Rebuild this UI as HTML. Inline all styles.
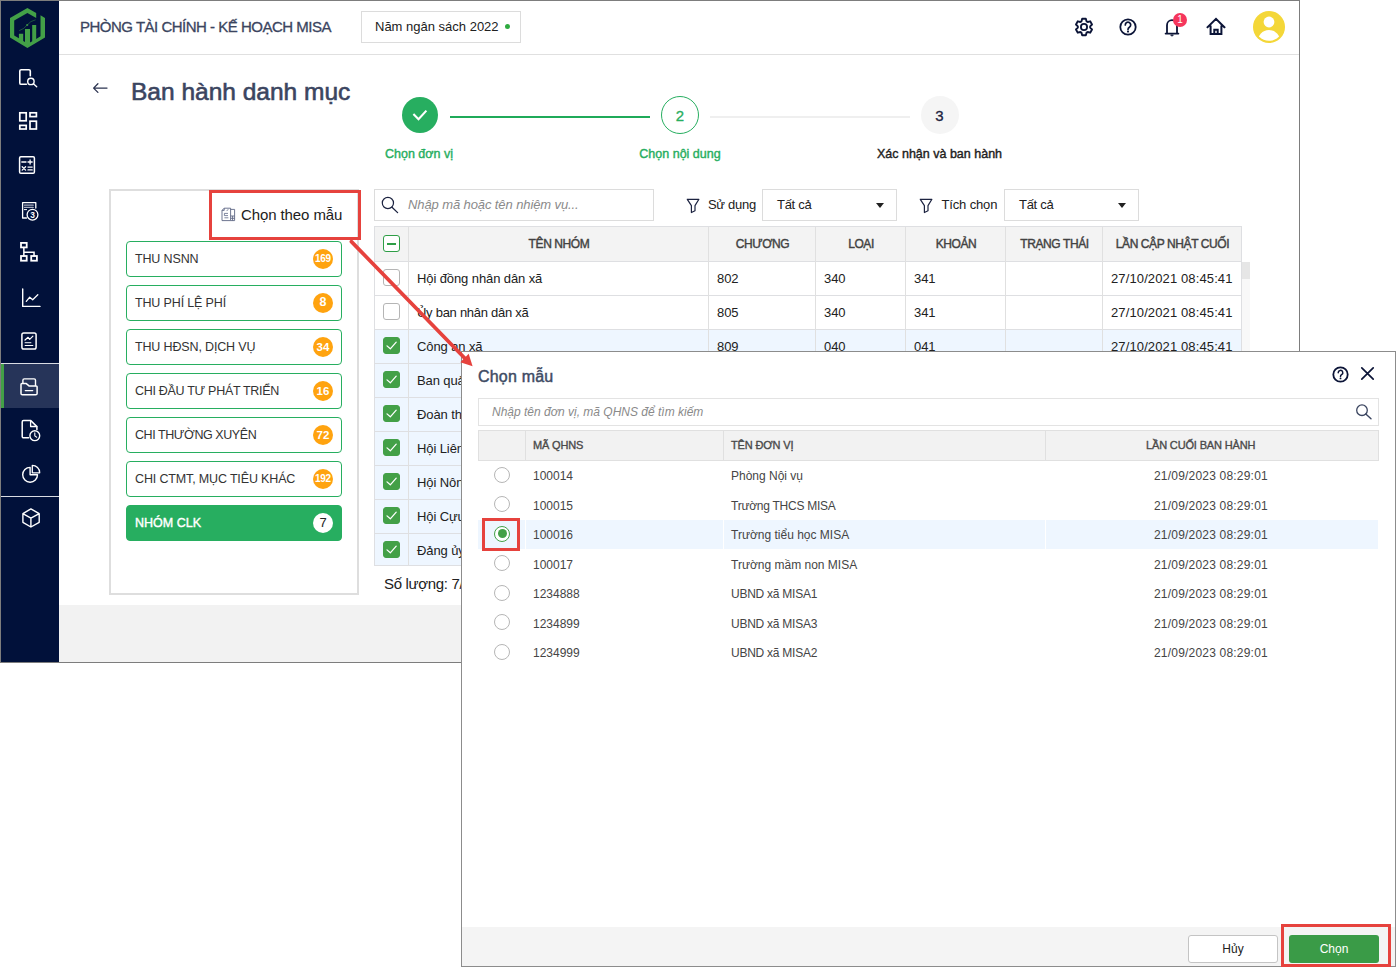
<!DOCTYPE html>
<html lang="vi">
<head>
<meta charset="utf-8">
<title>Ban hành danh mục</title>
<style>
*{box-sizing:border-box;margin:0;padding:0}
html,body{width:1398px;height:970px;overflow:hidden;background:#fff}
body{font-family:"Liberation Sans",sans-serif;font-size:13px;color:#212121;position:relative}
.a{position:absolute}
.t{position:absolute;white-space:nowrap;line-height:1}
#win{position:absolute;left:0;top:0;width:1300px;height:663px;border:1px solid #7d7d7d;background:#fff}
#side{position:absolute;left:1px;top:1px;width:58px;height:661px;background:#01113a}
#hdr{position:absolute;left:59px;top:1px;width:1240px;height:54px;background:#fff;border-bottom:1px solid #e0e0e0}
#foot{position:absolute;left:59px;top:605px;width:1240px;height:57px;background:#f2f2f2}
svg{position:absolute;overflow:visible}
.sico{fill:none;stroke:#fff;stroke-width:1.6;stroke-linecap:round;stroke-linejoin:round}
.hico{fill:none;stroke:#0b1437;stroke-width:1.8;stroke-linecap:round;stroke-linejoin:round}
/* left panel */
#lp{position:absolute;left:109px;top:189px;width:250px;height:406px;border:2px solid #dedede;background:#fff}
.cat{position:absolute;left:126px;width:216px;height:36px;border:1px solid #27ae60;border-radius:4px;background:#fff}
.cat span{position:absolute;left:8px;top:11px;font-size:12.5px;letter-spacing:-0.15px;line-height:1;color:#333;white-space:nowrap}
.cat b{position:absolute;right:8px;top:7px;width:20px;height:20px;border-radius:50%;background:#ffa30f;color:#fff;font-size:11.5px;line-height:20px;text-align:center;font-weight:bold}
.cat.on{background:#27ae60}
.cat.on span{color:#fff;-webkit-text-stroke:0.4px #fff;letter-spacing:0}
.cat.on b{background:#fff;color:#212121;font-weight:normal;font-size:13px}
.redbox{position:absolute;border:3px solid #e6423d}
/* inputs */
.inp{position:absolute;height:32px;border:1px solid #dcdcdc;background:#fff}
.ph{position:absolute;white-space:nowrap;line-height:1;font-style:italic;color:#8a8a8a}
.caret{position:absolute;width:0;height:0;border-left:4.5px solid transparent;border-right:4.5px solid transparent;border-top:5px solid #212121}
/* table */
#tb{position:absolute;left:374px;top:226px;width:868px;height:340px;border:1px solid #dedfe2;background:#fff;overflow:hidden}
#tb .hd{position:absolute;left:0;top:0;width:868px;height:35px;background:#f3f3f3;border-bottom:1px solid #dedfe2}
#tb .row{position:absolute;left:0;width:868px;height:34px;border-bottom:1px solid #dedfe2}
#tb .row.sel{background:#eef6ff}
#tb .vl{position:absolute;top:0;width:1px;height:342px;background:#e0e0e0}
#tb .th{position:absolute;top:11px;font-size:12px;letter-spacing:-0.4px;-webkit-text-stroke:0.4px #424242;color:#424242;line-height:1;white-space:nowrap;text-align:center}
#tb .td{position:absolute;top:10px;font-size:13px;letter-spacing:-0.1px;line-height:1;white-space:nowrap;color:#212121}
.cb{position:absolute;width:17px;height:17px;border:1px solid #b5b5b5;border-radius:3px;background:#fff}
.cb.ck{background:#43a047;border-color:#43a047}
.cb.ind{border-color:#2e9e46}
/* modal */
#md{position:absolute;left:461px;top:351px;width:935px;height:616px;border:1px solid #8c8c8c;background:#fff}
#mdf{position:absolute;left:462px;top:927px;width:933px;height:39px;background:#f4f4f4}
.mrow{position:absolute;left:478px;width:900px;height:29px}
.mrow.sel{background:#eef6ff}
.mtd{position:absolute;font-size:12px;line-height:1;white-space:nowrap;color:#454545}
.rd{position:absolute;width:16px;height:16px;border:1px solid #b6b6b6;border-radius:50%;background:#fff}
.mth{font-size:11px;-webkit-text-stroke:0.35px #4a4a4a;color:#4a4a4a;letter-spacing:-0.15px}
</style>
</head>
<body>
<div id="win"></div>
<div id="side"></div>
<div id="hdr"></div>
<div id="foot"></div>
<!-- sidebar -->
<svg style="left:0;top:0" width="60" height="662" viewBox="0 0 60 662">
 <!-- logo -->
 <g fill="#43a047">
  <path d="M36.2 12.9L27.4 7.9L10 17.9V37.4L27.4 48.1L45 37.4V17.9L40.5 15.3V36.3L36.2 38.9V25H32.2V41.2L30 42.4V29H25V42.1L23.2 41V33.7H18.9V38.3L14.2 35.4V20.4L27.4 13L36.2 18z"/>
  <circle cx="27.2" cy="25" r="1.1" opacity="0.85"/>
 </g>
 <path d="M19.2 30.6Q24 29.2 27.2 25T35.6 19.8" fill="none" stroke="#43a047" stroke-width="0.65" opacity="0.7"/>
 <!-- active item -->
 <rect x="1" y="363" width="58" height="1" fill="#d9dce3"/>
 <rect x="1" y="364" width="58" height="44" fill="#263459"/>
 <rect x="1" y="364" width="3" height="44" fill="#43a047"/>
 <rect x="1" y="496" width="58" height="1" fill="#d9dce3"/>
 <g class="sico">
  <!-- 1 doc search -->
  <path d="M30.3 75.8V71.1a1.4 1.4 0 0 0-1.4-1.4H21.2a1.4 1.4 0 0 0-1.4 1.4V82.9a1.4 1.4 0 0 0 1.4 1.4H26.4"/>
  <circle cx="30.9" cy="81.4" r="3.2" stroke-width="1.4"/><path d="M33.4 83.7L36.7 86.7" stroke-width="1.4"/>
  <!-- 2 grid -->
  <g stroke-width="1.7" stroke-linejoin="miter"><rect x="19.8" y="112.8" width="6.4" height="8"/><rect x="30" y="112.8" width="6.4" height="3.8"/><rect x="19.8" y="125.4" width="6.4" height="3.6"/><rect x="30" y="121.2" width="6.4" height="7.8"/></g>
  <!-- 3 calculator -->
  <rect x="19.6" y="156.7" width="14.8" height="16.6" rx="1.3" stroke-width="1.5"/>
  <g stroke-width="1.3"><path d="M21.8 162H26M28 162H32.2M30.1 159.9V164.1M22.2 166.7L25.6 170.1M25.6 166.7L22.2 170.1M28 167.1H32.2M28 169.9H32.2"/></g>
  <!-- 4 doc clock -->
  <path d="M35.8 208V202.6H22.6V218H26.5" stroke-width="1.3"/>
  <path d="M24.5 205.2H33.2M24.5 207.4H33.2" stroke="#a9afc0" stroke-width="1.3"/>
  <path d="M24.3 209.6H26.6" stroke-width="1"/>
  <circle cx="32.5" cy="214.7" r="5.4" stroke-width="1.3" fill="#01113a"/>
  <text x="32.6" y="217.6" text-anchor="middle" font-family="Liberation Sans, sans-serif" font-size="8.4" font-weight="bold" fill="#fff" stroke="none">3</text>
  <!-- 5 org chart -->
  <g stroke-width="1.8" stroke-linejoin="miter"><rect x="21" y="242.9" width="5.7" height="4.5"/><rect x="21" y="256" width="5.7" height="4.7"/><rect x="31.2" y="256" width="5.7" height="4.7"/><path d="M23.85 247.4V256M23.85 252.2H34.05V256" stroke-width="1.5"/></g>
  <!-- 6 line chart -->
  <path d="M22.7 289V306.4H40" stroke-width="1.4"/><path d="M26.3 301.3L29.7 297.2L32.7 299.7L37.8 294.8" stroke-width="1.3"/>
  <!-- 7 report -->
  <rect x="21.9" y="332.9" width="14.2" height="16.2" rx="1.8" stroke-width="1.5"/>
  <path d="M25 340L28.1 337.3L29.7 339.3L32.9 336.1" stroke-width="1.2"/><path d="M25.2 342.7H30.8" stroke="#c3c8d4" stroke-width="1.3"/><path d="M25.2 345.5H32.8" stroke-width="1.2"/>
  <!-- 8 folder -->
  <path d="M22.9 383V380.3a1.4 1.4 0 0 1 1.4-1.4H34.1a1.4 1.4 0 0 1 1.4 1.4V385.5" stroke-width="1.4"/>
  <path d="M21 384.5a0.9 0.9 0 0 1 .9-.9H26.3L29.3 386.1H36.2a0.9 0.9 0 0 1 .9.9V393.4a1.4 1.4 0 0 1-1.4 1.4H22.4a1.4 1.4 0 0 1-1.4-1.4z" stroke-width="1.5"/>
  <path d="M25.3 390.6H32.7" stroke-width="1.3"/>
  <!-- 9 doc with clock -->
  <path d="M28.6 437.8H23.6a1.4 1.4 0 0 1-1.4-1.4V422a1.4 1.4 0 0 1 1.4-1.4H30.8L36.9 426.6V429.5" stroke-width="1.5"/>
  <path d="M30.6 420.8V426.5H36.8" stroke-width="1.3"/>
  <circle cx="34.8" cy="435.7" r="4.9" stroke-width="1.4" fill="#01113a"/><path d="M34.8 432.9V435.9L36.7 437.2" stroke-width="1.1"/>
  <!-- 10 pie -->
  <path d="M30.1 467.4A7.4 7.4 0 1 0 37.5 474.8H30.1z" stroke-width="1.4"/>
  <path d="M32.3 465.4A7.4 7.4 0 0 1 39.7 472.8H32.3z" stroke-width="1.3"/>
  <!-- 11 cube -->
  <path d="M30.9 508.9L39.2 513.7V522.3L30.9 527L22.9 522.3V513.7zM22.9 513.7L30.9 518.2L39.2 513.7M30.9 518.2V527" stroke-width="1.4"/>
 </g>
</svg>
<!-- header -->
<div class="t" id="org" style="left:80px;top:19px;font-size:15px;letter-spacing:-0.5px;color:#3b4560;-webkit-text-stroke:0.3px #3b4560">PHÒNG TÀI CHÍNH - KẾ HOẠCH MISA</div>
<div class="a" style="left:361px;top:11px;width:160px;height:32px;border:1px solid #dcdcdc;background:#fff"></div>
<div class="t" id="nam" style="left:375px;top:20px;font-size:13px;color:#212121">Năm ngân sách 2022</div>
<div class="a" style="left:505px;top:24px;width:5px;height:5px;border-radius:50%;background:#2eaa3f"></div>
<svg style="left:1060px;top:5px" width="240" height="46" viewBox="1060 5 240 46">
 <g class="hico">
  <!-- gear -->
  <path d="M1081.47 21.34L1082.17 18.80L1085.83 18.80L1086.53 21.34L1087.64 21.98L1090.18 21.31L1092.02 24.49L1090.17 26.36L1090.17 27.64L1092.02 29.51L1090.18 32.69L1087.64 32.02L1086.53 32.66L1085.83 35.20L1082.17 35.20L1081.47 32.66L1080.36 32.02L1077.82 32.69L1075.98 29.51L1077.83 27.64L1077.83 26.36L1075.98 24.49L1077.82 21.31L1080.36 21.98z" stroke-width="1.9" stroke-linejoin="round"/>
  <circle cx="1084" cy="27" r="3.1" stroke-width="1.8"/>
  <!-- help -->
  <circle cx="1128" cy="27" r="7.7" stroke-width="1.8"/>
  <path d="M1125.3 24.9a2.7 2.7 0 1 1 4.1 2.3c-.9.6-1.4 1.1-1.4 2.2" stroke-width="1.7"/>
  <!-- bell -->
  <path d="M1165.6 33.6H1178.4M1167 33.6V25.2a5 5 0 0 1 10 0V33.6" stroke-width="1.8"/>
  <path d="M1170.8 35.3a1.3 1.3 0 0 0 2.4 0z" fill="#0b1437" stroke-width="0.8"/>
  <!-- home -->
  <path d="M1207.6 27.2L1216 18.9L1224.4 27.2M1210.6 26.5V34.1H1221.4V26.5M1214.3 34V29.8H1217.7V34" stroke-width="2" stroke-linecap="square" stroke-linejoin="miter"/>
 </g>
 <circle cx="1128" cy="31.6" r="1.05" fill="#0b1437"/>
 <circle cx="1180" cy="20" r="7" fill="#f5365c"/>
 <!-- avatar -->
 <circle cx="1269" cy="27" r="16" fill="#f4d738"/>
 <circle cx="1269" cy="22" r="5.4" fill="#fff"/>
 <clipPath id="avc"><circle cx="1269" cy="27" r="13.8"/></clipPath>
 <ellipse cx="1269" cy="42.5" rx="11.8" ry="12.5" fill="#fff" clip-path="url(#avc)"/>
</svg>
<div class="t" style="left:1173px;top:15px;width:14px;text-align:center;font-size:10px;color:#fff">1</div>
<!-- title -->
<svg class="hico" style="left:90px;top:80px;stroke-width:1.3;stroke:#2b3350" width="20" height="16" viewBox="90 80 20 16"><path d="M107 88.1H93.6M97.9 83.8L93.6 88.1L97.9 92.4"/></svg>
<div class="t" id="ttl" style="left:131px;top:80px;font-size:24.5px;color:#3b4560;-webkit-text-stroke:0.6px #3b4560">Ban hành danh mục</div>
<!-- stepper -->
<div class="a" style="left:402px;top:97px;width:36px;height:36px;border-radius:50%;background:#27ae60"></div>
<svg style="left:410px;top:105px" width="20" height="20" viewBox="410 105 20 20"><path d="M413.4 114.1L418.5 119.3L426.4 110.6" fill="none" stroke="#fff" stroke-width="2.1"/></svg>
<div class="a" style="left:450px;top:116px;width:200px;height:2px;background:#1faa59"></div>
<div class="a" style="left:661px;top:96px;width:38px;height:38px;border-radius:50%;border:1px solid #27ae60;background:#fff"></div>
<div class="t" style="left:662px;top:108px;width:36px;text-align:center;font-size:15px;-webkit-text-stroke:0.3px #27ae60;color:#27ae60">2</div>
<div class="a" style="left:710px;top:116px;width:200px;height:2px;background:#efefef"></div>
<div class="a" style="left:921px;top:96px;width:38px;height:38px;border-radius:50%;background:#f5f5f5"></div>
<div class="t" style="left:921.5px;top:108px;width:36px;text-align:center;font-size:15px;-webkit-text-stroke:0.3px #1c2340;color:#1c2340">3</div>
<div class="t" style="left:385px;top:148px;font-size:12.5px;-webkit-text-stroke:0.4px #27ae60;color:#27ae60">Chọn đơn vị</div>
<div class="t" style="left:580px;top:148px;width:200px;text-align:center;font-size:12.5px;-webkit-text-stroke:0.4px #27ae60;color:#27ae60">Chọn nội dung</div>
<div class="t" style="left:839.5px;top:148px;width:200px;text-align:center;font-size:12.5px;-webkit-text-stroke:0.4px #212121;color:#212121">Xác nhận và ban hành</div>
<!-- left panel -->
<div id="lp"></div>
<svg style="left:220.5px;top:206.5px" width="15" height="15" viewBox="0 0 15 15" fill="none" stroke="#5d6785" stroke-width="0.9"><path d="M3.2 1.2H9.6V13.6H1V3.4zM3.2 1.2V3.4H1"/><path d="M9.6 2.4H13.6V13.6H9.6M9.6 9H13.6M9.6 11.3H13.6M11.6 9V13.6"/><path d="M3.4 6.4H7M3.4 6.4V8.6H7M3.4 10.8H7.4M5.6 3.6L7.4 2.6" stroke-width="0.8"/></svg>
<div class="t" style="left:241px;top:207px;font-size:15px;letter-spacing:-0.1px;color:#212121">Chọn theo mẫu</div>
<div class="cat" style="top:241px"><span>THU NSNN</span><b style="font-size:10px;letter-spacing:-0.3px;line-height:19px">169</b></div>
<div class="cat" style="top:285px"><span>THU PHÍ LỆ PHÍ</span><b style="font-size:12.5px;line-height:19px">8</b></div>
<div class="cat" style="top:329px"><span>THU HĐSN, DỊCH VỤ</span><b>34</b></div>
<div class="cat" style="top:373px"><span style="letter-spacing:-0.3px">CHI ĐẦU TƯ PHÁT TRIỂN</span><b>16</b></div>
<div class="cat" style="top:417px"><span style="letter-spacing:-0.43px">CHI THƯỜNG XUYÊN</span><b>72</b></div>
<div class="cat" style="top:461px"><span>CHI CTMT, MỤC TIÊU KHÁC</span><b style="font-size:10px;letter-spacing:-0.3px;line-height:19px">192</b></div>
<div class="cat on" style="top:505px"><span>NHÓM CLK</span><b>7</b></div>
<!-- search + filters -->
<div class="inp" style="left:374px;top:189px;width:280px"></div>
<svg style="left:380px;top:195px" width="20" height="20" viewBox="380 195 20 20"><circle cx="387.9" cy="203" r="5.6" fill="none" stroke="#1c2340" stroke-width="1.2"/><path d="M392 207.2L397.6 212.6" stroke="#1c2340" stroke-width="1.3" stroke-linecap="round"/></svg>
<div class="ph" style="left:408px;top:198px;font-size:13px;letter-spacing:-0.1px">Nhập mã hoặc tên nhiệm vụ...</div>
<svg style="left:685px;top:197px" width="16" height="18" viewBox="685 197 16 18"><path d="M687.3 199.3H698.9L695 205.6V210.7L691.4 212.5V205.6z" fill="none" stroke="#1c2340" stroke-width="1.2" stroke-linejoin="round"/></svg>
<div class="t" style="left:708px;top:198px;font-size:13px;letter-spacing:-0.3px">Sử dụng</div>
<div class="inp" style="left:762px;top:189px;width:135px"></div>
<div class="t" style="left:777px;top:198px;font-size:13px;letter-spacing:-0.3px">Tất cả</div>
<div class="caret" style="left:876px;top:203px"></div>
<svg style="left:918px;top:197px" width="16" height="18" viewBox="685 197 16 18"><path d="M687.3 199.3H698.9L695 205.6V210.7L691.4 212.5V205.6z" fill="none" stroke="#1c2340" stroke-width="1.2" stroke-linejoin="round"/></svg>
<div class="t" style="left:941.5px;top:198px;font-size:13px;letter-spacing:-0.15px">Tích chọn</div>
<div class="inp" style="left:1004px;top:189px;width:135px"></div>
<div class="t" style="left:1019px;top:198px;font-size:13px;letter-spacing:-0.3px">Tất cả</div>
<div class="caret" style="left:1118px;top:203px"></div>
<!-- table -->
<div id="tb">
 <div class="hd"></div>
 <div class="row" style="top:35px"></div>
 <div class="row" style="top:69px"></div>
 <div class="row sel" style="top:103px"></div>
 <div class="row sel" style="top:137px"></div>
 <div class="row sel" style="top:171px"></div>
 <div class="row sel" style="top:205px"></div>
 <div class="row sel" style="top:239px"></div>
 <div class="row sel" style="top:273px"></div>
 <div class="row sel" style="top:307px"></div>
 <div class="vl" style="left:33px"></div><div class="vl" style="left:333px"></div><div class="vl" style="left:440px"></div><div class="vl" style="left:530px"></div><div class="vl" style="left:630px"></div><div class="vl" style="left:727px"></div>
<div class="cb ind" style="left:8px;top:8px"></div><div class="a" style="left:12px;top:16px;width:9px;height:2px;background:#2e9e46"></div>
 <div class="cb" style="left:8px;top:42px"></div>
 <div class="cb" style="left:8px;top:76px"></div>
 <div class="cb ck" style="left:8px;top:110px"></div><svg style="left:11px;top:114px" width="11" height="9" viewBox="0 0 11 9"><path d="M1 4.9L4.3 7.8L10.2 1.2" fill="none" stroke="#fff" stroke-width="1.25" stroke-linecap="round" stroke-linejoin="round"/></svg>
 <div class="cb ck" style="left:8px;top:144px"></div><svg style="left:11px;top:148px" width="11" height="9" viewBox="0 0 11 9"><path d="M1 4.9L4.3 7.8L10.2 1.2" fill="none" stroke="#fff" stroke-width="1.25" stroke-linecap="round" stroke-linejoin="round"/></svg>
 <div class="cb ck" style="left:8px;top:178px"></div><svg style="left:11px;top:182px" width="11" height="9" viewBox="0 0 11 9"><path d="M1 4.9L4.3 7.8L10.2 1.2" fill="none" stroke="#fff" stroke-width="1.25" stroke-linecap="round" stroke-linejoin="round"/></svg>
 <div class="cb ck" style="left:8px;top:212px"></div><svg style="left:11px;top:216px" width="11" height="9" viewBox="0 0 11 9"><path d="M1 4.9L4.3 7.8L10.2 1.2" fill="none" stroke="#fff" stroke-width="1.25" stroke-linecap="round" stroke-linejoin="round"/></svg>
 <div class="cb ck" style="left:8px;top:246px"></div><svg style="left:11px;top:250px" width="11" height="9" viewBox="0 0 11 9"><path d="M1 4.9L4.3 7.8L10.2 1.2" fill="none" stroke="#fff" stroke-width="1.25" stroke-linecap="round" stroke-linejoin="round"/></svg>
 <div class="cb ck" style="left:8px;top:280px"></div><svg style="left:11px;top:284px" width="11" height="9" viewBox="0 0 11 9"><path d="M1 4.9L4.3 7.8L10.2 1.2" fill="none" stroke="#fff" stroke-width="1.25" stroke-linecap="round" stroke-linejoin="round"/></svg>
 <div class="cb ck" style="left:8px;top:314px"></div><svg style="left:11px;top:318px" width="11" height="9" viewBox="0 0 11 9"><path d="M1 4.9L4.3 7.8L10.2 1.2" fill="none" stroke="#fff" stroke-width="1.25" stroke-linecap="round" stroke-linejoin="round"/></svg>
 <div class="th" style="left:34px;width:300px">TÊN NHÓM</div>
 <div class="th" style="left:334px;width:107px">CHƯƠNG</div>
 <div class="th" style="left:441px;width:90px">LOẠI</div>
 <div class="th" style="left:531px;width:100px">KHOẢN</div>
 <div class="th" style="left:631px;width:97px">TRẠNG THÁI</div>
 <div class="th" style="left:728px;width:139px">LẦN CẬP NHẬT CUỐI</div>
 <div class="td" style="left:42px;top:45px">Hội đồng nhân dân xã</div><div class="td" style="left:342px;top:45px">802</div><div class="td" style="left:449px;top:45px">340</div><div class="td" style="left:539px;top:45px">341</div><div class="td" style="letter-spacing:0.12px;left:736px;top:45px">27/10/2021 08:45:41</div>
 <div class="td" style="left:42px;top:79px;letter-spacing:-0.27px">Ủy ban nhân dân xã</div><div class="td" style="left:342px;top:79px">805</div><div class="td" style="left:449px;top:79px">340</div><div class="td" style="left:539px;top:79px">341</div><div class="td" style="letter-spacing:0.12px;left:736px;top:79px">27/10/2021 08:45:41</div>
 <div class="td" style="left:42px;top:113px">Công an xã</div><div class="td" style="left:342px;top:113px">809</div><div class="td" style="left:449px;top:113px">040</div><div class="td" style="left:539px;top:113px">041</div><div class="td" style="letter-spacing:0.12px;left:736px;top:113px">27/10/2021 08:45:41</div>
 <div class="td" style="left:42px;top:147px">Ban quản lý</div>
 <div class="td" style="left:42px;top:181px">Đoàn thanh niên</div>
 <div class="td" style="left:42px;top:215px">Hội Liên hiệp phụ nữ</div>
 <div class="td" style="left:42px;top:249px">Hội Nông dân</div>
 <div class="td" style="left:42px;top:283px">Hội Cựu chiến binh</div>
 <div class="td" style="left:42px;top:317px">Đảng ủy xã</div>
</div>
<div class="a" style="left:1242px;top:262px;width:8px;height:304px;background:#f8f8f8"></div><div class="a" style="left:1242px;top:262px;width:8px;height:17px;background:#e6e6e6"></div>
<div class="t" style="left:384px;top:576px;font-size:15px;letter-spacing:-0.33px;color:#212121">Số lượng: 7/9</div>
<!-- modal -->
<div id="md"></div><div id="mdf"></div>
<div class="t" id="mttl" style="left:478px;top:368.6px;font-size:16px;letter-spacing:0.2px;color:#404b64;-webkit-text-stroke:0.45px #404b64">Chọn mẫu</div>
<svg style="left:1332px;top:366px" width="17" height="17" viewBox="0 0 17 17"><circle cx="8.5" cy="8.5" r="7.2" fill="none" stroke="#0b1437" stroke-width="1.8"/><path d="M6.2 6.7a2.3 2.3 0 1 1 3.4 2c-.8.5-1.1.9-1.1 1.7" fill="none" stroke="#0b1437" stroke-width="1.5" stroke-linecap="round"/><circle cx="8.5" cy="12.4" r="0.95" fill="#0b1437"/></svg>
<svg style="left:1361px;top:367px" width="13" height="13" viewBox="0 0 13 13"><path d="M0.8 0.8l11.4 11.4M12.2 0.8L0.8 12.2" stroke="#0b1437" stroke-width="1.7" stroke-linecap="round"/></svg>
<div class="inp" style="left:478px;top:398px;width:901px;height:28px;border-color:#e3e3e3"></div>
<div class="ph" style="left:492px;top:405.5px;font-size:12px">Nhập tên đơn vị, mã QHNS để tìm kiếm</div>
<svg style="left:1355px;top:403px" width="18" height="18" viewBox="0 0 18 18"><circle cx="7" cy="7.2" r="5.3" fill="none" stroke="#3b4560" stroke-width="1.3"/><path d="M10.8 11l5.2 4.8" stroke="#3b4560" stroke-width="1.4" stroke-linecap="round"/></svg>
<div class="a" style="left:478px;top:430px;width:901px;height:31px;background:#f2f2f2;border:1px solid #e0e0e0"></div>
<div class="a" style="left:525px;top:431px;width:1px;height:29px;background:#e0e0e0"></div>
<div class="a" style="left:723px;top:431px;width:1px;height:29px;background:#e0e0e0"></div>
<div class="a" style="left:1045px;top:431px;width:1px;height:29px;background:#e0e0e0"></div>
<div class="t mth" style="left:533px;top:440px">MÃ QHNS</div>
<div class="t mth" style="left:731px;top:440px">TÊN ĐƠN VỊ</div>
<div class="t mth" style="left:1146px;top:440px">LẦN CUỐI BAN HÀNH</div>
<div class="rd" style="left:494px;top:466.5px"></div>
<div class="mtd" style="left:533px;top:470px">100014</div><div class="mtd" style="left:731px;top:470px;letter-spacing:0px">Phòng Nội vụ</div><div class="mtd" style="left:1154px;top:470px;letter-spacing:0.2px">21/09/2023 08:29:01</div>
<div class="rd" style="left:494px;top:496.0px"></div>
<div class="mtd" style="left:533px;top:500px">100015</div><div class="mtd" style="left:731px;top:500px;letter-spacing:-0.25px">Trường THCS MISA</div><div class="mtd" style="left:1154px;top:500px;letter-spacing:0.2px">21/09/2023 08:29:01</div>
<div class="a" style="left:478px;top:520px;width:47px;height:29px;background:#eef6ff"></div>
<div class="a" style="left:526px;top:520px;width:197px;height:29px;background:#eef6ff"></div>
<div class="a" style="left:724px;top:520px;width:321px;height:29px;background:#eef6ff"></div>
<div class="a" style="left:1046px;top:520px;width:332px;height:29px;background:#eef6ff"></div>
<div class="rd" style="left:494px;top:525.5px;border-color:#43a047"></div><div class="a" style="left:497.5px;top:529.0px;width:9px;height:9px;border-radius:50%;background:#43a047"></div>
<div class="mtd" style="left:533px;top:529px">100016</div><div class="mtd" style="left:731px;top:529px;letter-spacing:0px">Trường tiểu học MISA</div><div class="mtd" style="left:1154px;top:529px;letter-spacing:0.2px">21/09/2023 08:29:01</div>
<div class="rd" style="left:494px;top:555.0px"></div>
<div class="mtd" style="left:533px;top:559px">100017</div><div class="mtd" style="left:731px;top:559px;letter-spacing:0px">Trường mầm non MISA</div><div class="mtd" style="left:1154px;top:559px;letter-spacing:0.2px">21/09/2023 08:29:01</div>
<div class="rd" style="left:494px;top:584.5px"></div>
<div class="mtd" style="left:533px;top:588px">1234888</div><div class="mtd" style="left:731px;top:588px;letter-spacing:-0.25px">UBND xã MISA1</div><div class="mtd" style="left:1154px;top:588px;letter-spacing:0.2px">21/09/2023 08:29:01</div>
<div class="rd" style="left:494px;top:614.0px"></div>
<div class="mtd" style="left:533px;top:618px">1234899</div><div class="mtd" style="left:731px;top:618px;letter-spacing:-0.25px">UBND xã MISA3</div><div class="mtd" style="left:1154px;top:618px;letter-spacing:0.2px">21/09/2023 08:29:01</div>
<div class="rd" style="left:494px;top:643.5px"></div>
<div class="mtd" style="left:533px;top:647px">1234999</div><div class="mtd" style="left:731px;top:647px;letter-spacing:-0.25px">UBND xã MISA2</div><div class="mtd" style="left:1154px;top:647px;letter-spacing:0.2px">21/09/2023 08:29:01</div>
<div class="redbox" style="left:482px;top:518px;width:38px;height:33px"></div>
<div class="a" style="left:1188px;top:935px;width:90px;height:28px;border:1px solid #c4c4c4;border-radius:3px;background:#fff"></div>
<div class="t" style="left:1188px;top:943px;width:90px;text-align:center;font-size:12px;color:#212121">Hủy</div>
<div class="a" style="left:1289px;top:935px;width:90px;height:28px;border-radius:3px;background:#3a9b47"></div>
<div class="t" style="left:1289px;top:943px;width:90px;text-align:center;font-size:12px;color:#fff">Chọn</div>
<div class="redbox" style="left:1281px;top:924px;width:110px;height:43px"></div>
<div class="redbox" style="left:209px;top:190px;width:152px;height:50px"></div>
<svg style="left:0;top:0" width="1398" height="970" viewBox="0 0 1398 970"><path d="M351.4 241.6L465.5 359" stroke="#e6423d" stroke-width="3.7" stroke-linecap="round"/><path d="M472.6 366.3L460.3 362.2L468.7 353.8z" fill="#e6423d"/></svg>
</body>
</html>
